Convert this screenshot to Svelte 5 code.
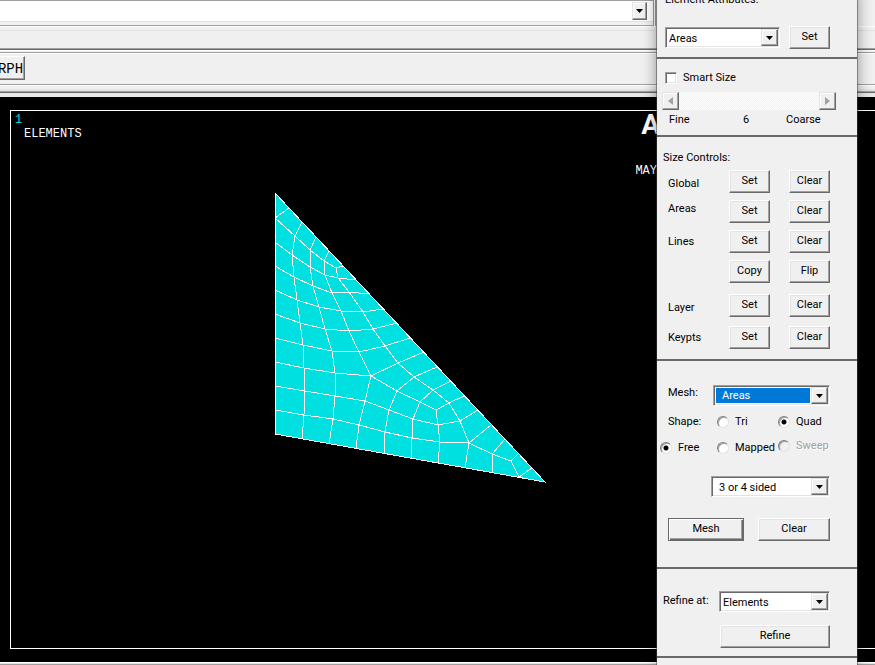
<script>
  let smart = $state(false);
  let attribute = $state('Areas');
  let meshOf = $state('Areas');
  let sided = $state('3 or 4 sided');
  let refineAt = $state('Elements');
  let shape = $state('Quad');
  let mesher = $state('Free');

  const sizeRows = [
    { name: 'Global', align: 'low', actions: ['Set', 'Clear'] },
    { name: 'Areas', align: 'high', actions: ['Set', 'Clear'] },
    { name: 'Lines', align: '', actions: ['Set', 'Clear'] },
    { name: '', align: '', actions: ['Copy', 'Flip'] },
    { name: 'Layer', align: 'low', actions: ['Set', 'Clear'] },
    { name: 'Keypts', align: '', actions: ['Set', 'Clear'] }
  ];

  // element edges, one polyline per run of nodes
  const edges = [
    '275,218 289,208',
    '302,222 295,236 292,255 294,277 297,300 300,323 303,345 304,368 305,391 304,415 302,439',
    '316,237 310,250 310,267 313,286 319,307 325,329 332,351 335,373 335,396 333,419 329,444',
    '329,251 324,261 325,275 332,293 341,311 349,331 359,352 371,376 365,401 359,425 356,448',
    '343,266 336,268 338,278 349,292 363,312 373,329 385,346 398,363 414,377 433,390 449,403 460,421 469,443 465,468',
    '275,218 295,236 310,250 324,261 336,268',
    '275,242 292,255 310,267 325,275 338,278 356,280',
    '275,266 294,277 313,286 332,293 349,292 369,294',
    '275,290 297,300 319,307 341,311 363,312 383,309',
    '275,314 300,323 325,329 349,331 373,329 397,323',
    '275,338 303,345 332,351 359,352 385,346 410,338',
    '275,362 304,368 335,373 371,376 398,363 424,352',
    '275,386 305,391 335,396 365,401 389,410 413,419 438,425 460,421 478,410',
    '275,410 304,415 333,419 359,425 385,432 412,438 440,442 469,443 491,425',
    '371,376 397,391 420,402 436,410 449,403 464,396',
    '437,367 414,377 397,391 389,410 385,432 384,453',
    '451,381 433,390 420,402 413,419 412,438 411,458',
    '436,410 438,425 440,442 438,463',
    '469,443 492,454 511,461 519,453',
    '505,439 492,454 492,472',
    '511,461 519,477 532,468'
  ];
</script>

{#snippet combo(id, label, options, value, change, extra)}
  <span class="combo {extra}">
    <select {id} aria-label={label} {value} onchange={(e) => change(e.target.value)}>
      {#each options as o}<option>{o}</option>{/each}
    </select>
    <span class="drop" aria-hidden="true"><svg width="7" height="4" viewBox="0 0 7 4"><path d="M0 0h7L3.5 4z" /></svg></span>
  </span>
{/snippet}

<div class="app">
  <header>
    <div class="command">
      <div class="entry">
        <input type="text" aria-label="Command" />
        <button class="drop" aria-label="History"><svg width="7" height="4" viewBox="0 0 7 4"><path d="M0 0h7L3.5 4z" /></svg></button>
      </div>
      <div class="rest"></div>
    </div>
    <div class="strip"></div>
    <div class="toolbar"><button class="tool">RPH</button></div>
    <div class="edge"></div>
  </header>

  <main>
    <div class="frame"></div>
    <svg class="mesh" width="560" height="500" viewBox="0 0 560 500" shape-rendering="crispEdges">
      <path d="M275 193L545 482L275 434Z" fill="#00e0e0" stroke="#fff" />
      {#each edges as points}<polyline {points} fill="none" stroke="#fff" />{/each}
    </svg>
    <span class="note num">1</span>
    <span class="note title">ELEMENTS</span>
    <span class="note brand">A</span>
    <span class="note date">MAY</span>
  </main>
  <footer></footer>

  <aside>
    <section class="attributes">
      <label for="attr">Element Attributes:</label>
      <div class="row">
        {@render combo('attr', 'Element attributes', ['Areas', 'Lines', 'Global'], attribute, (v) => (attribute = v), 'wide')}
        <button class="btn end">Set</button>
      </div>
    </section>

    <section class="smart">
      <label class="check"><input type="checkbox" bind:checked={smart} />Smart Size</label>
      <div class="scroll">
        <button class="arrow" disabled aria-label="Finer"><svg width="5" height="8" viewBox="0 0 5 8"><path d="M5 0v8L0 4z" /></svg></button>
        <input type="range" min="1" max="10" value="6" disabled aria-label="Smart size level" />
        <button class="arrow" disabled aria-label="Coarser"><svg width="5" height="8" viewBox="0 0 5 8"><path d="M0 0v8l5-4z" /></svg></button>
      </div>
      <div class="scale"><span>Fine</span><span>6</span><span>Coarse</span></div>
    </section>

    <section class="sizes">
      <h2>Size Controls:</h2>
      <div class="table">
        {#each sizeRows as row, i}
          <div class="size {row.align}" class:apart={i === 4}>
            <span>{row.name}</span>
            {#each row.actions as a}<button class="btn">{a}</button>{/each}
          </div>
        {/each}
      </div>
    </section>

    <section class="mesher">
      <div class="row pick">
        <label for="meshof">Mesh:</label>
        {@render combo('meshof', 'Mesh', ['Areas', 'Lines', 'Volumes'], meshOf, (v) => (meshOf = v), 'focused')}
      </div>
      <div class="radios shape">
        <span class="lead">Shape:</span>
        <label><input type="radio" value="Tri" bind:group={shape} />Tri</label>
        <label><input type="radio" value="Quad" bind:group={shape} />Quad</label>
      </div>
      <div class="radios">
        <label><input type="radio" value="Free" bind:group={mesher} />Free</label>
        <label><input type="radio" value="Mapped" bind:group={mesher} />Mapped</label>
        <label class="off"><input type="radio" value="Sweep" disabled bind:group={mesher} />Sweep</label>
      </div>
      <div class="row sided">
        {@render combo('sided', 'Sides', ['3 or 4 sided', 'Pick corners'], sided, (v) => (sided = v), 'inset')}
      </div>
      <div class="row go">
        <button class="btn default">Mesh</button>
        <button class="btn">Clear</button>
      </div>
    </section>

    <section class="refine">
      <div class="row">
        <label for="refine">Refine at:</label>
        {@render combo('refine', 'Refine at', ['Elements', 'Nodes', 'Lines'], refineAt, (v) => (refineAt = v), '')}
      </div>
      <button class="btn">Refine</button>
    </section>
  </aside>
</div>

<style>
  :global(body) { background: #000; }
  .app {
    position: relative;
    display: flex;
    flex-direction: column;
    height: 100vh;
    overflow: hidden;
    font: 11px/18px Roboto, "Liberation Sans", sans-serif;
    color: #000;
  }
  * { box-sizing: border-box; }
  button, select, input { font: inherit; color: inherit; margin: 0; padding: 0; border-radius: 0; }
  svg { display: block; }

  header { background: #f0f0f0; flex: none; }
  .command { display: flex; height: 26px; }
  .entry {
    flex: 1;
    display: flex;
    height: 22px;
    background: #fff;
    border-top: 1px solid #a0a0a0;
    border-bottom: 1px solid #e3e3e3;
    padding: 1px 0;
  }
  .command { border-bottom: 1px solid #a0a0a0; }
  .entry input { flex: 1; border: 0; outline: 0; background: #fff; }
  .entry .drop { width: 15px; height: 18px; margin-right: 6px; }
  .rest { width: 222px; height: 26px; border-left: 1px solid #a0a0a0; box-shadow: inset 1px 0 #fff, inset 2px 0 #a0a0a0; background: #f0f0f0; }
  .strip { height: 24px; border-top: 1px solid #fff; border-bottom: 1px solid #696969; box-shadow: inset 0 3px #f0f0f0, inset 0 4px #e3e3e3, inset 0 -1px #a0a0a0; }
  .toolbar { display: flex; height: 35px; padding-top: 6px; border-bottom: 1px solid #a0a0a0; box-shadow: inset 0 1px #fff, inset 0 2px #f0f0f0, inset 0 3px #a0a0a0, inset 0 4px #fff; }
  .tool {
    width: 29px;
    height: 24px;
    margin-left: -4px;
    padding-top: 2px;
    font: 14px/16px "Liberation Mono", monospace;
    background: #f0f0f0;
    border: 1px solid;
    border-color: #fff #696969 #696969 #fff;
    box-shadow: inset -1px -1px #a0a0a0;
  }
  .edge { height: 12px; border-top: 1px solid #fff; border-bottom: 4px solid #e8e8e8; box-shadow: inset 0 -1px #696969, inset 0 -2px #a0a0a0, inset 0 -4px #e3e3e3; }

  main { flex: 1; background: #000; overflow: hidden; }
  .frame { height: calc(100% - 26px); margin: 13px 0 0 10px; border: 1px solid #fff; border-right: 0; }
  .mesh { position: absolute; left: 0; top: 0; }
  .note { position: absolute; color: #fff; font: 12px/14px "Liberation Mono", monospace; }
  .num { left: 15px; top: 113px; color: #00e0e0; }
  .title { left: 24px; top: 127px; }
  .brand { right: 215px; top: 109px; font: bold 28px/32px Roboto, sans-serif; }
  .date { right: 218px; top: 164px; }
  footer { flex: none; height: 3px; background: #e3e3e3; border-top: 1px solid #fff; border-bottom: 1px solid #a0a0a0; }

  aside {
    position: absolute;
    top: -9px;
    bottom: 0;
    right: 18px;
    width: 200px;
    background: #f0f0f0;
    box-shadow: 0 0 0 1px #40404080, 0 0 14px #00000070;
  }
  section { border-bottom: 2px solid #696969; }
  .row { display: flex; align-items: center; }

  .btn {
    height: 23px;
    width: 41px;
    padding-bottom: 1px;
    line-height: 18px;
    background: #f0f0f0;
    border: 1px solid;
    border-color: #fff #696969 #696969 #fff;
    box-shadow: inset -1px -1px #a0a0a0, inset 1px 1px #e3e3e3;
  }
  .default { border: 1px solid #696969; box-shadow: inset 1px 1px #fff, inset -1px -1px #696969, inset -2px -2px #a0a0a0; }

  .combo {
    display: flex;
    flex: 1;
    height: 21px;
    padding: 1px;
    background: #fff;
    border: 1px solid;
    border-color: #a0a0a0 #fff #fff #a0a0a0;
    box-shadow: inset 1px 1px #696969, inset -1px -1px #e3e3e3;
  }
  .combo select { flex: 1; min-width: 0; appearance: none; border: 0; outline: 0; background: #fff; margin: 1px 0 0 1px; padding-left: 1px; line-height: 17px; }
  .drop {
    display: grid;
    place-items: center;
    flex: none;
    width: 17px;
    background: #f0f0f0;
    border: 1px solid;
    border-color: #e3e3e3 #696969 #696969 #e3e3e3;
    box-shadow: inset -1px -1px #a0a0a0, inset 1px 1px #fff;
  }
  .focused select { background: #0078d7; color: #fff; margin: 1px; padding-left: 6px; line-height: 16px; }
  .inset select { padding-left: 5px; }

  .attributes { height: 68px; padding: 0 27px 0 8px; }
  .attributes label { display: block; }
  .attributes .row { margin-top: 17px; gap: 9px; }

  .smart { height: 78px; padding: 9px 21px 0 5px; }
  .check { display: flex; align-items: center; height: 20px; padding-left: 3px; gap: 6px; }
  .check input { appearance: none; width: 12px; height: 12px; background: #fff; border: 1px solid; border-color: #a0a0a0 #fff #fff #a0a0a0; box-shadow: inset 1px 1px #696969, inset -1px -1px #e3e3e3; }
  .check input:checked { background: #444; }
  .scroll { display: flex; height: 18px; margin-top: 4px; }
  .arrow { display: grid; place-items: center; width: 17px; background: #f0f0f0; border: 1px solid; border-color: #e3e3e3 #696969 #696969 #e3e3e3; box-shadow: inset -1px -1px #a0a0a0, inset 1px 1px #fff; }
  .arrow path { fill: #a0a0a0; }
  .scroll input { appearance: none; flex: 1; min-width: 0; height: 18px; background: repeating-conic-gradient(#fff 0 25%, #f0f0f0 0 50%) 0 0 / 2px 2px; }
  .scroll input::-webkit-slider-thumb { appearance: none; width: 1px; height: 1px; }
  .scale { display: grid; grid-template-columns: 74px 43px 1fr; padding: 1px 0 0 7px; }

  .sizes { height: 224px; padding: 12px 27px 0 6px; }
  h2 { margin: 0; font: inherit; }
  .table { display: flex; flex-direction: column; gap: 7px; margin-top: 3px; padding-left: 5px; }
  .size { display: flex; align-items: center; height: 23px; }
  .size span { flex: 1; }
  .size .btn + .btn { margin-left: 19px; }
  .low span { align-self: flex-end; }
  .high span { align-self: flex-start; }
  .apart { margin: 4px 0 2px; }

  .mesher { height: 208px; padding: 23px 27px 0 3px; }
  .pick label { width: 45px; line-height: 16px; }
  .pick { margin: 1px 0 0 8px; align-items: flex-start; }
  .radios { display: grid; grid-template-columns: 57px 61px 1fr; height: 18px; margin-top: 8px; white-space: nowrap; }
  .radios.shape { margin-top: 7px; }
  .radios label { display: flex; align-items: center; gap: 6px; }
  .lead { padding-left: 8px; }
  .radios input {
    appearance: none;
    flex: none;
    width: 12px;
    height: 12px;
    border-radius: 50%;
    background: #fff;
    border: 1px solid;
    border-color: #808080 #e3e3e3 #e3e3e3 #808080;
    box-shadow: inset 1px 1px #a0a0a0;
  }
  .radios input:checked { background: radial-gradient(circle at 50% 50%, #000 0 2px, #fff 3px); }
  .radios .off { color: #a0a0a0; text-shadow: 1px 1px #fff; align-self: start; height: 14px; }
  .radios .off input { background: #f0f0f0; }
  .sided { margin: 19px 0 0 51px; }
  .go { margin: 21px 0 0 8px; gap: 14px; }
  .go .btn { width: 72px; }
  .go .default { width: 76px; }

  .refine { height: 89px; padding: 22px 27px 0 6px; }
  .refine label { width: 56px; line-height: 20px; align-self: flex-start; }
  .refine .btn { display: block; width: 110px; margin: 13px 0 0 auto; }
</style>
